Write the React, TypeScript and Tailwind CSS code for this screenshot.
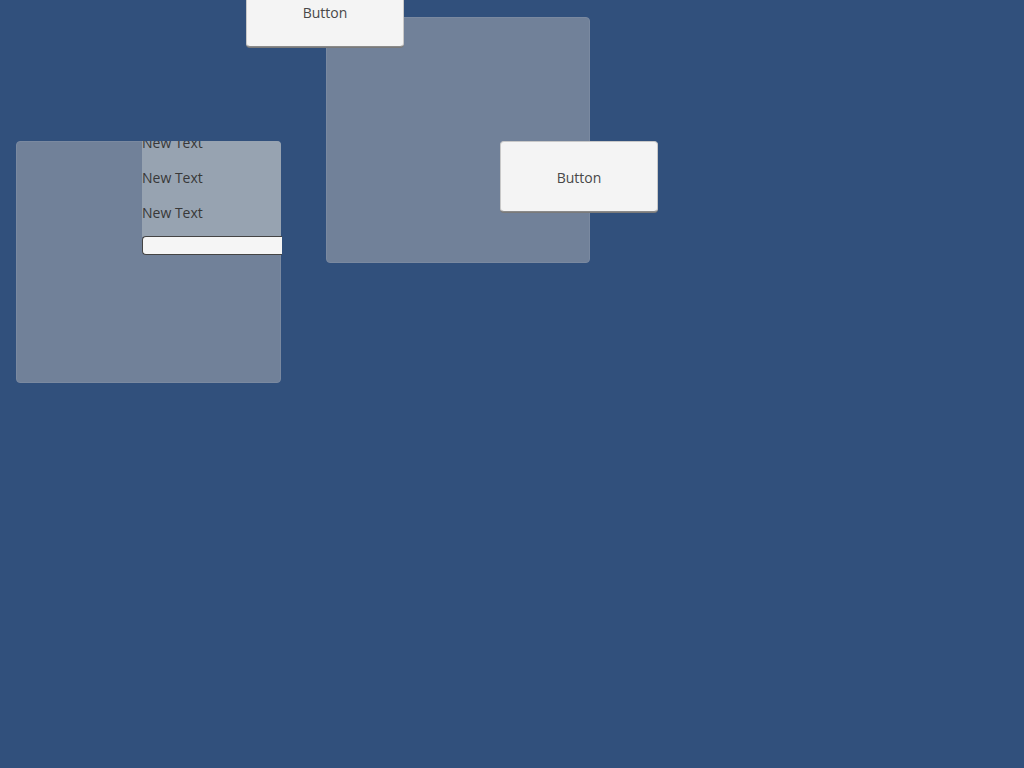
const font = { fontFamily: '"Open Sans", "Noto Sans", sans-serif' };

function UnityButton({ className }: { className: string }) {
	return (
		<div
			className={`absolute flex items-center justify-center rounded-[4px] bg-[#f4f4f4] border border-[#c8c8c8] border-b-[#8a8a8a] shadow-[0_1px_0_#7a7a7a] text-[14px] text-[#484848] ${className}`}
		>
			Button
		</div>
	);
}

export default function App() {
	return (
		<div className="relative w-[1024px] h-[768px] overflow-hidden bg-[#31507c]" style={font}>
			{/* left panel with scroll content */}
			<div className="absolute left-[16px] top-[141px] w-[265px] h-[242px] rounded-[4px] bg-[#718199] border border-[#7a89a0]">
				<div className="absolute left-[125px] top-[-1px] w-[139px] h-[96px] bg-[#97a3b1] rounded-tr-[4px] overflow-hidden">
					<div className="flex flex-col text-[14px] text-[#383838] -mt-[16px]">
						<span className="h-[35px] leading-[35px]">New Text</span>
						<span className="h-[35px] leading-[35px]">New Text</span>
						<span className="h-[35px] leading-[35px]">New Text</span>
					</div>
				</div>
				<div className="absolute left-[125px] top-[94px] w-[140px] h-[19px] rounded-l-[4px] bg-[#f5f5f5] border border-[#444] border-r-0" />
			</div>

			{/* right panel */}
			<div className="absolute left-[326px] top-[17px] w-[264px] h-[246px] rounded-[4px] bg-[#718199] border border-[#7a89a0]" />

			<UnityButton className="left-[246px] top-[-23px] w-[158px] h-[70px]" />
			<UnityButton className="left-[500px] top-[141px] w-[158px] h-[71px] pt-[2px]" />
		</div>
	);
}
